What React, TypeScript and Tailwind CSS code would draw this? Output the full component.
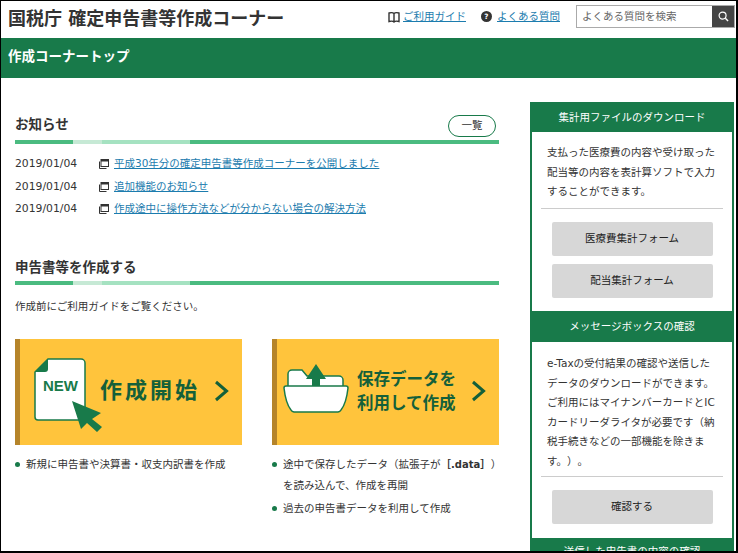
const jp = "font-['DejaVu_Sans','Noto_Sans_CJK_JP',sans-serif]";

function Stripe() {
  return (
    <div className="flex h-[4px] w-[484px]">
      <div className="w-[58px] bg-[#4bbb80]" />
      <div className="w-[29px] bg-[#c6e9d5]" />
      <div className="w-[88px] bg-[#a5e2c1]" />
      <div className="flex-1 bg-[#4bbb80]" />
    </div>
  );
}

function WinIcon() {
  return (
    <svg width="10" height="10" viewBox="0 0 10 10" className="shrink-0">
      <rect x="2" y="0.5" width="7.5" height="7" fill="#fff" stroke="#333" />
      <rect x="2" y="0.5" width="7.5" height="2" fill="#333" />
      <path d="M0.5 2.5V9.5H7.5" fill="none" stroke="#333" />
    </svg>
  );
}

function News({ text }: { text: string }) {
  return (
    <div className="flex h-[22.5px] items-center">
      <span className="w-[84px] text-[10.8px] text-[#333]">2019/01/04</span>
      <WinIcon />
      <a className="ml-[5px] text-[#1c7cae] underline">{text}</a>
    </div>
  );
}

function Chevron() {
  return (
    <svg width="15" height="22" viewBox="0 0 15 22" className="shrink-0">
      <path d="M2 2L12.5 11L2 20" fill="none" stroke="#14603a" strokeWidth="3" />
    </svg>
  );
}

function Dot({ children }: { children: React.ReactNode }) {
  return (
    <li className="flex leading-[21px]">
      <span className="mt-[8px] mr-[6px] h-[5px] w-[5px] shrink-0 rounded-full bg-[#187a4a]" />
      <span className="whitespace-nowrap">{children}</span>
    </li>
  );
}

function GrayBtn({ children }: { children: React.ReactNode }) {
  return (
    <div className="mx-auto flex h-[34px] w-[161px] items-center justify-center rounded-[2px] bg-[#d7d7d7] text-[#222]">
      {children}
    </div>
  );
}

export default function App() {
  return (
    <div className={`${jp} h-[553px] w-[738px] overflow-hidden border-t border-r-2 border-b-2 border-l border-black bg-white text-[10.5px] text-[#333] [text-spacing-trim:space-all]`}>
      <header className="flex h-[37px] items-center justify-between pr-[1px] pl-[7px]">
        <div className="pb-[2px] text-[18px] font-bold text-[#333]">国税庁 確定申告書等作成コーナー</div>
        <div className="flex items-center pb-[6px]">
          <svg width="12" height="12" viewBox="0 0 12 12" className="mr-[3px]">
            <path d="M6 2.5C5 1.5 3 1.5 1 2V10.5C3 10 5 10 6 11C7 10 9 10 11 10.5V2C9 1.5 7 1.5 6 2.5ZM6 2.5V11" fill="none" stroke="#333" strokeWidth="1.4" />
          </svg>
          <a className="text-[#1c7cae] underline">ご利用ガイド</a>
          <svg width="11" height="11" viewBox="0 0 12 12" className="mr-[5px] ml-[15px]">
            <circle cx="6" cy="6" r="6" fill="#333" />
            <text x="6" y="9" textAnchor="middle" fontSize="8" fontWeight="700" fill="#fff">?</text>
          </svg>
          <a className="text-[#1c7cae] underline">よくある質問</a>
          <div className="ml-[16px] flex h-[23px] w-[159px] border border-[#aaa]">
            <div className="flex flex-1 items-center pl-[5px] text-[#666]">よくある質問を検索</div>
            <div className="flex w-[22px] items-center justify-center bg-[#444]">
              <svg width="11" height="11" viewBox="0 0 12 12">
                <circle cx="5" cy="5" r="3.8" fill="none" stroke="#fff" strokeWidth="1.3" />
                <path d="M8 8L11 11" stroke="#fff" strokeWidth="1.5" />
              </svg>
            </div>
          </div>
        </div>
      </header>

      <div className="flex h-[40px] items-center bg-[#187a4a] pb-[3px] pl-[7px] text-[13.5px] font-bold text-white">作成コーナートップ</div>

      <div className="flex">
        <main className="w-[498px] pt-[35px] pl-[14px]">
          <div className="flex h-[25px] w-[484px] items-center justify-between">
            <h2 className="mb-[2px] text-[13.5px] font-bold text-[#333]">お知らせ</h2>
            <div className="mr-[3px] flex h-[22px] w-[48px] items-center justify-center rounded-[11px] border-[1.5px] border-[#187a4a] text-[#333]">一覧</div>
          </div>
          <div className="mt-[2px]"><Stripe /></div>
          <div className="mt-[9px]">
            <News text="平成30年分の確定申告書等作成コーナーを公開しました" />
            <News text="追加機能のお知らせ" />
            <News text="作成途中に操作方法などが分からない場合の解決方法" />
          </div>

          <h2 className="mt-[34.5px] flex h-[25px] items-center text-[13.5px] font-bold text-[#333]">申告書等を作成する</h2>
          <div className="mt-[1px]"><Stripe /></div>
          <p className="mt-[13px] h-[16px] leading-[16px]">作成前にご利用ガイドをご覧ください。</p>

          <div className="mt-[25px] flex w-[484px] gap-[30px]">
            <div className="w-[227px]">
              <div className="flex h-[106px] items-center border-l-[5px] border-[#b5842a] bg-[#ffc43c]">
                <div className="relative mt-[7px] ml-[14px] h-[75px] w-[65px] shrink-0">
                  <svg width="70" height="76" viewBox="0 0 70 76">
                    <path d="M14 1H47a4 4 0 0 1 4 4V59a3 3 0 0 1-3 3H4a3 3 0 0 1-3-3V14Z" fill="#fff" stroke="#187a4a" strokeWidth="1.5" />
                    <path d="M1 14L14 1V11a3 3 0 0 1-3 3Z" fill="#187a4a" />
                    <path d="M38 43L67 55L58 61L68 69L63 74L53 65L47 71Z" fill="#187a4a" />
                  </svg>
                  <span className="absolute top-[20px] left-[9px] font-['Liberation_Sans'] text-[15px] leading-[16px] font-bold text-[#187a4a]">NEW</span>
                </div>
                <span className="mb-[4px] ml-[1px] text-[22px] font-bold tracking-[3px] whitespace-nowrap text-[#14603a]">作成開始</span>
                <span className="mb-[3px] ml-[14px]"><Chevron /></span>
              </div>
              <ul className="mt-[9px]">
                <Dot>新規に申告書や決算書・収支内訳書を作成</Dot>
              </ul>
            </div>
            <div className="w-[227px]">
              <div className="flex h-[106px] items-center border-l-[5px] border-[#b5842a] bg-[#ffc43c]">
                <svg width="66" height="50" viewBox="0 0 66 50" className="mb-[7px] ml-[6px] shrink-0">
                  <path d="M5 30V10a4 4 0 0 1 4-4H19l5 6H56a4 4 0 0 1 4 4V30Z" fill="#fff" stroke="#187a4a" strokeWidth="1.5" />
                  <path d="M1 24a2 2 0 0 1 2-2H63a2 2 0 0 1 2 2C64 33 62 41 58 46a4 4 0 0 1-3 2H11a4 4 0 0 1-3-2C4 41 2 33 1 24Z" fill="#fff" stroke="#187a4a" strokeWidth="1.5" />
                  <path d="M33 0L43 15H37V22H29V15H23Z" fill="#187a4a" />
                </svg>
                <span className="mb-[1px] ml-[8px] w-[100px] text-[16.5px] leading-[24px] font-bold whitespace-nowrap text-[#14603a]">保存データを<br />利用して作成</span>
                <span className="mb-[3px] ml-[14px]"><Chevron /></span>
              </div>
              <ul className="mt-[9px] space-y-[2px]">
                <Dot>途中で保存したデータ（拡張子が<b>［<span className="text-[10px]">.data</span>］</b>）<br />を読み込んで、作成を再開</Dot>
                <Dot>過去の申告書データを利用して作成</Dot>
              </ul>
            </div>
          </div>
        </main>

        <aside className="mt-[24px] ml-[31px] w-[204px] border-x-2 border-t-2 border-[#187a4a]">
          <div className="flex h-[28px] items-center justify-center bg-[#187a4a] text-white">集計用ファイルのダウンロード</div>
          <div className="h-[179px]">
            <p className="px-[15px] pt-[11px] leading-[19.5px]">支払った医療費の内容や受け取った配当等の内容を表計算ソフトで入力することができます。</p>
            <div className="mx-[9px] mt-[6px] mb-[13px] border-t border-[#ccc]" />
            <GrayBtn>医療費集計フォーム</GrayBtn>
            <div className="h-[8px]" />
            <GrayBtn>配当集計フォーム</GrayBtn>
          </div>
          <div className="flex h-[31px] items-center justify-center bg-[#187a4a] text-white">メッセージボックスの確認</div>
          <div className="h-[196px]">
            <p className="px-[15px] pt-[12px] leading-[19.5px]">e-Taxの受付結果の確認や送信したデータのダウンロードができます。ご利用にはマイナンバーカードとICカードリーダライタが必要です（納税手続きなどの一部機能を除きます。）。</p>
            <div className="mx-[9px] mt-[5px] mb-[13px] border-t border-[#ccc]" />
            <GrayBtn>確認する</GrayBtn>
          </div>
          <div className="flex h-[28px] items-center justify-center bg-[#187a4a] text-white">送信した申告書の内容の確認</div>
        </aside>
      </div>
    </div>
  );
}
